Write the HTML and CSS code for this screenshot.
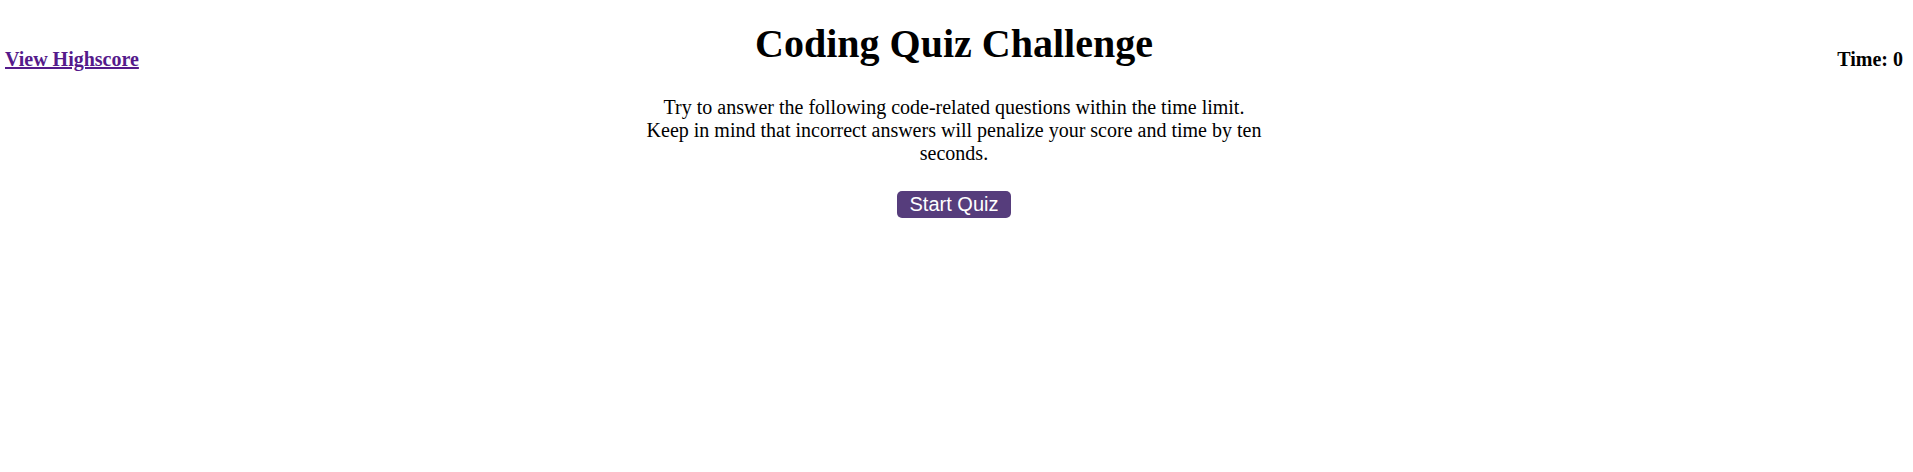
FILE: index.html
```html
<!DOCTYPE html>
<html lang="en">
<head>
<meta charset="utf-8">
<title>Coding Quiz Challenge</title>
<link rel="stylesheet" href="styles.css">
</head>
<body>
<header class="top-bar">
  <a class="highscore-link" href="#">View Highscore</a>
  <h1 class="title">Coding Quiz Challenge</h1>
  <div class="timer">Time: <span>0</span></div>
</header>
<main class="intro">
  <p class="intro-text">Try to answer the following code-related questions within the time limit. Keep in mind that incorrect answers will penalize your score and time by ten seconds.</p>
  <button class="start-btn" type="button">Start Quiz</button>
</main>
</body>
</html>
```

FILE: styles.css
```css
html, body {
  margin: 0;
  padding: 0;
  background: #ffffff;
}

body {
  font-family: "Liberation Serif", "Times New Roman", serif;
  color: #000000;
}

.top-bar {
  display: grid;
  grid-template-columns: 1fr auto 1fr;
  align-items: start;
  padding: 0 10px 0 5px;
}

.highscore-link {
  justify-self: start;
  margin-top: 48px;
  font-size: 20px;
  font-weight: 700;
  line-height: 22px;
  color: #551a8b;
  text-decoration: underline;
}

.title {
  margin: 22px 0 0;
  font-size: 40px;
  font-weight: 700;
  line-height: 44px;
  text-align: center;
}

.timer {
  justify-self: end;
  margin-top: 48px;
  font-size: 20px;
  font-weight: 700;
  line-height: 22px;
}

.intro {
  display: flex;
  flex-direction: column;
  align-items: center;
  padding: 0 10px 0 5px;
}

.intro-text {
  width: 622px;
  margin: 26px 0 0;
  font-size: 20px;
  line-height: 23px;
  text-align: center;
}

.start-btn {
  margin-top: 26px;
  padding: 2px 13px;
  border: none;
  border-radius: 5px;
  background: #563d7c;
  color: #ffffff;
  font-family: "Liberation Sans", Arial, sans-serif;
  font-size: 20px;
  line-height: 23px;
  cursor: pointer;
}
```
